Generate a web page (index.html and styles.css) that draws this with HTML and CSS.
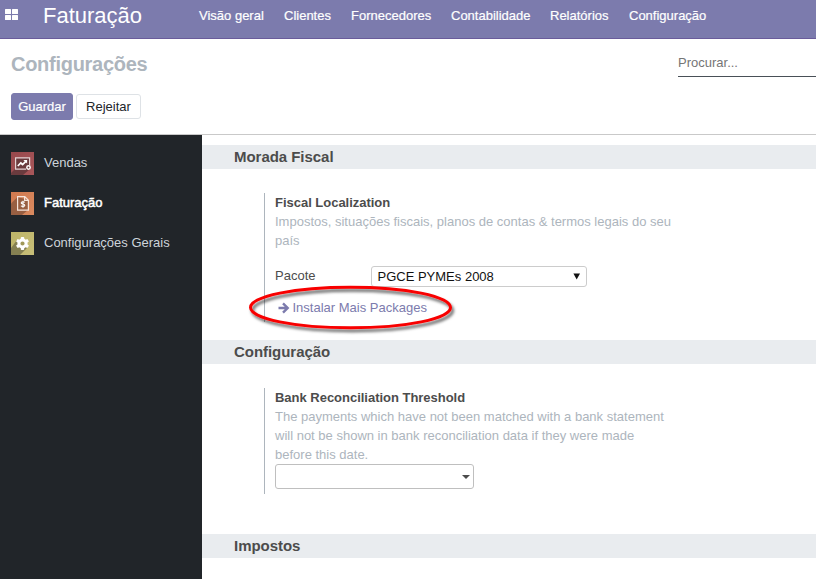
FILE: index.html
```html
<!DOCTYPE html>
<html lang="pt">
<head>
<meta charset="utf-8">
<title>Configurações</title>
<link rel="stylesheet" href="styles.css">
</head>
<body>
<header class="navbar">
  <svg class="apps" width="13" height="11" viewBox="0 0 13 11" fill="#fff"><rect width="6" height="5" rx=".5"/><rect x="7" width="6" height="5" rx=".5"/><rect y="6" width="6" height="5" rx=".5"/><rect x="7" y="6" width="6" height="5" rx=".5"/></svg>
  <div class="brand">Faturação</div>
  <nav class="menu"><a class="m1">Visão geral</a><a class="m2">Clientes</a><a class="m3">Fornecedores</a><a class="m4">Contabilidade</a><a class="m5">Relatórios</a><a class="m6">Configuração</a></nav>
</header>
<section class="panel">
  <div class="panel-left">
    <h1>Configurações</h1>
    <div class="buttons"><button class="btn save">Guardar</button><button class="btn discard">Rejeitar</button></div>
  </div>
  <div class="search">Procurar...</div>
</section>
<div class="body">
  <aside class="sidebar">
    <a class="tab">
      <svg width="23" height="23" viewBox="0 0 23 23"><defs><linearGradient id="r" x2="1" y2="1"><stop stop-color="#97484c"/><stop offset="1" stop-color="#a9575a"/></linearGradient></defs><rect width="23" height="23" fill="url(#r)"/><path d="M4 17 0 21v2h12l7-6V6H4z" fill="#6a3b3e"/><path d="M15 17.200H4.600V5.800h14v7.500" fill="none" stroke="#e4d2d3" stroke-width="1.200"/><path d="m6.800 14 3-3 1.800 1.500 3.200-3.200" fill="none" stroke="#fff" stroke-width="1.700"/><path d="M12.400 7.900h3.700v3.700z" fill="#fff"/><circle cx="17.500" cy="15.500" r="1.700" fill="none" stroke="#fff" stroke-width="1.500"/></svg>
      <span>Vendas</span></a>
    <a class="tab active">
      <svg width="23" height="23" viewBox="0 0 23 23"><defs><linearGradient id="o" x2="1" y2="1"><stop stop-color="#d0794f"/><stop offset="1" stop-color="#da8b60"/></linearGradient></defs><rect width="23" height="23" fill="url(#o)"/><path d="M6.500 5 0 11.500V23h11l6-5V8z" fill="#985f42"/><path d="M6.600 4.600h7.200l3.600 3.600v9.900H6.600zM13.600 4.700v3.700h3.700" fill="none" stroke="#f6e5dc" stroke-width="1.200"/><path d="M13.700 10.400c-.5-.7-3.500-1-3.500.5 0 1.600 3.600.7 3.600 2.400 0 1.500-3.200 1.400-3.800.4M12 8.700v7" fill="none" stroke="#fff" stroke-width="1.100"/></svg>
      <span>Faturação</span></a>
    <a class="tab">
      <svg width="23" height="23" viewBox="0 0 23 23"><defs><linearGradient id="y" x2="1" y2="1"><stop stop-color="#beb568"/><stop offset="1" stop-color="#c7be78"/></linearGradient></defs><rect width="23" height="23" fill="url(#y)"/><path d="M6 8 0 16v7h9l8-8z" fill="#858052"/><g transform="translate(11.500 11.500)"><g fill="#fff"><rect x="-1.700" y="-6.600" width="3.400" height="13.200" rx=".8"/><rect x="-1.700" y="-6.600" width="3.400" height="13.200" rx=".8" transform="rotate(60)"/><rect x="-1.700" y="-6.600" width="3.400" height="13.200" rx=".8" transform="rotate(120)"/></g><circle r="3.600" fill="#a09858" stroke="#fff" stroke-width="3"/></g></svg>
      <span>Configurações Gerais</span></a>
  </aside>
  <main class="settings">
    <h2>Morada Fiscal</h2>
    <div class="box fiscal">
      <div class="label">Fiscal Localization</div>
      <p class="muted">Impostos, situações fiscais, planos de contas &amp; termos legais do seu<br>país</p>
      <div class="field"><span class="pacote">Pacote</span><div class="select"><span>PGCE PYMEs 2008</span><svg width="8" height="7" viewBox="0 0 8 7"><path d="M.4.500h6.600L3.700 6.500z" fill="#111"/></svg></div></div>
      <div class="install"><svg width="12" height="12" viewBox="0 0 12 12" fill="none" stroke="#7c7bad" stroke-width="2.400"><path d="M.5 6h9.500M5 1.300 9.700 6 5 10.700"/></svg><a>Instalar Mais Packages</a>
        <svg class="ring" width="214" height="56" viewBox="0 0 214 56"><defs><filter id="shadow" x="-10%" y="-20%" width="125%" height="150%"><feDropShadow dx="2" dy="3" stdDeviation="1.700" flood-color="#000" flood-opacity=".6"/></filter></defs><ellipse cx="103.500" cy="25.500" rx="100" ry="20.300" fill="none" stroke="#f80505" stroke-width="3" filter="url(#shadow)"/></svg>
      </div>
    </div>
    <h2>Configuração</h2>
    <div class="box bank">
      <div class="label">Bank Reconciliation Threshold</div>
      <p class="muted">The payments which have not been matched with a bank statement<br>will not be shown in bank reconciliation data if they were made<br>before this date.</p>
      <div class="date"><svg width="8" height="4" viewBox="0 0 8 4"><path d="M0 0h8L4 4z" fill="#4c4c4c"/></svg></div>
    </div>
    <h2>Impostos</h2>
  </main>
</div>
</body>
</html>
```
FILE: styles.css
```css
* { box-sizing: border-box; }
body { margin: 0; height: 579px; overflow: hidden; display: flex; flex-direction: column; background: #fff; color: #4c4c4c; font: 13px/19px "Liberation Sans", Arial, sans-serif; white-space: nowrap; }
h1, h2, p { margin: 0; }
svg { display: block; flex: none; }
.navbar { height: 39px; flex: none; display: flex; align-items: flex-start; background: #7c7bad; border-bottom: 1px solid #6a5c9b; color: #fff; }
.apps { margin: 9px 0 0 5px; }
.brand { width: 156px; margin-left: 25px; font-size: 22px; line-height: 31px; }
.menu { display: flex; padding-top: 6px; -webkit-text-stroke: .2px; }
.m1 { width: 85px; }
.m2 { width: 67px; }
.m3 { width: 100px; }
.m4 { width: 99px; }
.m5 { width: 79px; }
.panel { height: 96px; flex: none; display: flex; justify-content: space-between; border-bottom: 1px solid #c9c9c9; padding-left: 11px; }
h1 { padding-top: 13px; font-size: 20px; line-height: 24px; letter-spacing: -.28px; color: #adb5bd; }
.buttons { display: flex; align-items: center; gap: 3px; margin-top: 17px; }
.btn { font: inherit; padding: 0; border-radius: 3px; }
.save { width: 62px; height: 27px; color: #fff; background: #7c7bad; border: 1px solid #7c7bad; -webkit-text-stroke: .2px; }
.discard { width: 65px; height: 25px; color: #212529; background: #fff; border: 1px solid #dee2e6; }
.search { width: 138px; height: 38px; padding-top: 14px; border-bottom: 1px solid #495057; color: #757575; }
.body { flex: 1; display: flex; min-height: 0; }
.sidebar { width: 202px; flex: none; background: #212529; padding: 8px 0 0 11px; }
.tab { height: 40px; display: flex; align-items: center; gap: 10px; color: #ced4da; }
.tab span { margin-top: -1px; }
.tab.active { color: #fff; -webkit-text-stroke: .5px; }
.settings { flex: 1; padding-top: 10px; }
h2 { height: 24px; padding-left: 32px; background: #e9ecef; font-size: 15px; line-height: 24px; letter-spacing: -.04px; }
.box { margin: 24px 0 0 62px; padding-left: 10px; border-left: 1px solid #adb5bd; }
.fiscal { height: 129px; margin-bottom: 18px; }
.bank { height: 106px; margin-bottom: 40px; }
.label { font-weight: bold; letter-spacing: -.02px; }
.muted { color: #adb5bd; }
.field { display: flex; align-items: center; margin-top: 16px; height: 21px; }
.pacote { width: 96px; margin-top: -2px; }
.select { width: 216px; height: 21px; display: flex; align-items: center; justify-content: space-between; padding: 0 5px 0 5.500px; border: 1px solid #ccc; border-radius: 3px; color: #111; }
.install { position: relative; height: 19px; margin-top: 11px; display: flex; align-items: center; gap: 2.500px; padding-left: 3px; color: #7c7bad; }
.ring { position: absolute; left: -28px; top: -16px; }
.date { width: 199px; height: 25px; display: flex; align-items: center; justify-content: flex-end; padding-right: 3px; border: 1px solid #bfbfbf; border-radius: 3px; }
```
